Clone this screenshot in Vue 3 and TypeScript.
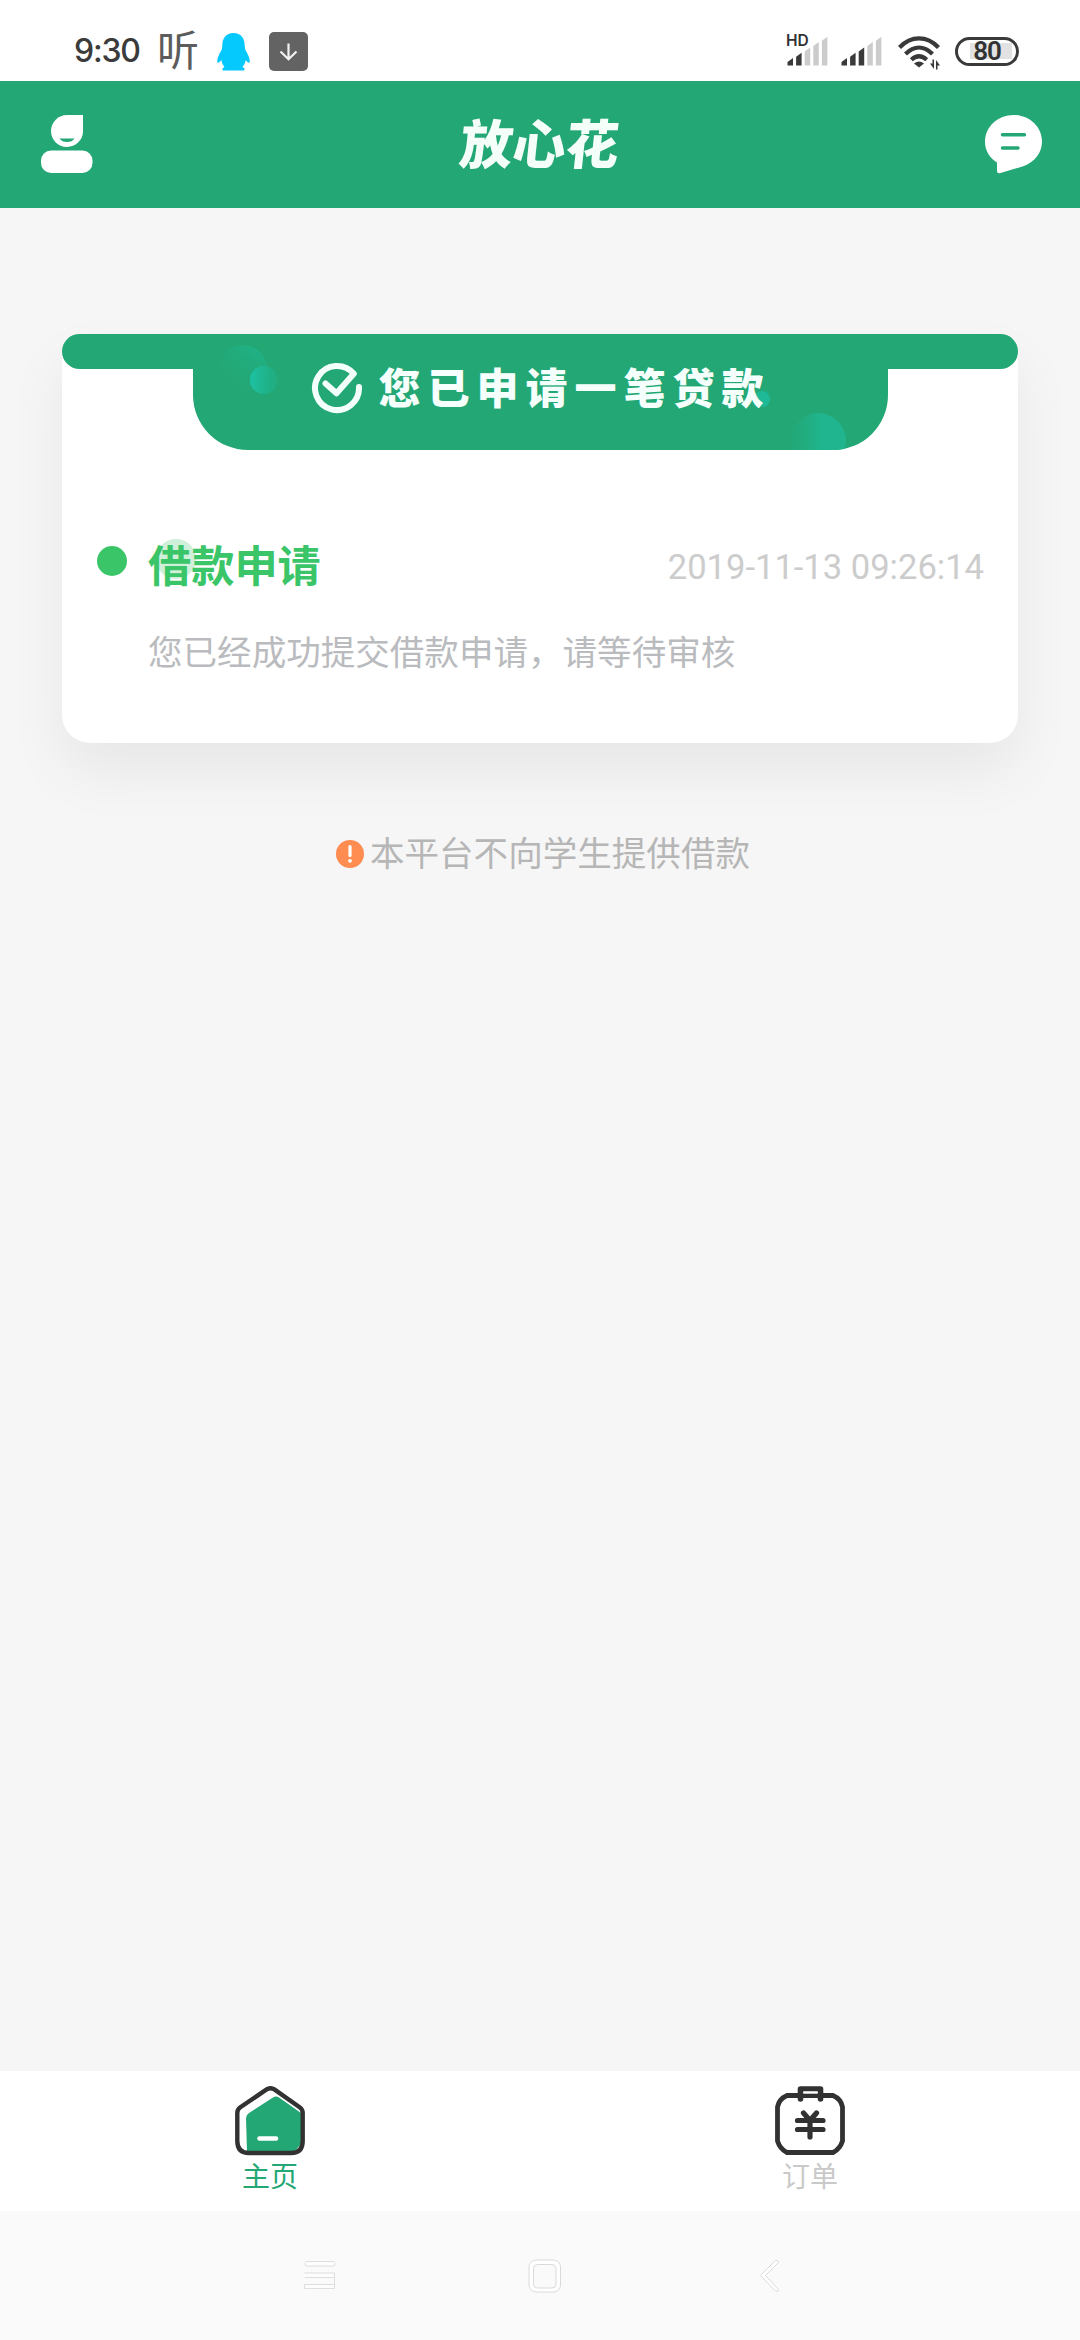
<script setup lang="ts">
interface SignalBar {
  x: number
  top: number
  on: boolean
}

const makeBars = (active: number): SignalBar[] =>
  [0, 1, 2, 3, 4].map((i) => ({ x: 0.5 + i * 8.6, top: 22 - i * 5.3, on: i < active }))

const signals = [
  { label: 'HD', bars: makeBars(2) },
  { label: '', bars: makeBars(3) },
]

const record = {
  title: '借款申请',
  time: '2019-11-13 09:26:14',
  detail: '您已经成功提交借款申请，请等待审核',
}
</script>

<template>
  <div class="screen">
    <div class="status">
      <span class="clock">9:30</span>
      <span class="listen">听</span>
      <svg class="penguin" width="33" height="38" viewBox="0 0 33 38">
        <path
          fill="#05c8fd"
          d="M16.500 0C9 0 5.500 5 5.300 12C5.200 15 5 16 4 18C1.500 22 0 26 .3 29C.7 31 3 29 4.300 27C4.900 30 6 32 7.500 34C5 35 4.500 37.500 7 37.500H26C28.500 37.500 28 35 25.500 34C27 32 28.200 30 28.800 27C30 29 32.300 31 32.700 29C33 26 31.500 22 29 18C28 16 27.800 15 27.700 12C27.500 5 24 0 16.500 0Z"
        />
      </svg>
      <svg class="download" width="39" height="39" viewBox="0 0 39 39">
        <rect width="39" height="39" rx="5" fill="#636363" />
        <path d="M19.500 11.500V27M11.500 19.500L19.500 27.300L27.500 19.500" fill="none" stroke="#f2f2f2" stroke-width="2.200" />
      </svg>
      <div class="status-right">
        <div v-for="(s, i) in signals" :key="i" class="signal" :class="{ second: i === 1 }">
          <svg width="42" height="30" viewBox="0 0 42 30">
            <path
              v-for="b in s.bars"
              :key="b.x"
              :d="`M${b.x} 29.500V${b.top + 4}L${b.x + 5.500} ${b.top}V29.500Z`"
              :fill="b.on ? '#3a3a3a' : '#cccccc'"
            />
          </svg>
          <span v-if="s.label" class="hd">{{ s.label }}</span>
        </div>
        <svg class="wifi" width="44" height="34" viewBox="0 0 44 34">
          <g fill="none" stroke="#393939" stroke-width="4.200">
            <path d="M1.500 11.500C13 -.7 29 -.7 40.500 11.500" />
            <path d="M7.500 18C16 9.500 26 9.500 34.500 18" />
            <path d="M13.300 23.800C18.500 19 23.500 19 28.700 23.800" />
          </g>
          <path d="M16 27.500Q21 23.500 26 27.500L21 31.500Z" fill="#393939" />
          <path d="M36 23.500V33L32 27.500H34.500V23.500ZM38 33.500V24L42 29.500H39.500V33.500Z" fill="#393939" />
        </svg>
        <div class="battery"><span class="charge">80</span></div>
      </div>
    </div>

    <header class="header">
      <svg width="52" height="59" viewBox="0 0 52 59">
        <path d="M26 0H42V16.500A16 16 0 1 1 26 0Z" fill="#fff" />
        <path d="M18.500 23.500H33.500Q31 27 26 27Q21 27 18.500 23.500Z" fill="#23a775" />
        <rect y="35.500" width="51.500" height="22.500" rx="10" fill="#fff" />
      </svg>
      <h1 class="brand">放心花</h1>
      <svg width="58" height="59" viewBox="0 0 58 59">
        <path
          d="M28.500 0C44 0 57 11.500 57 26.500C57 38 49.500 47 39 51L15.500 58Q12 59 12 56V47.500C5 43 0 36 0 27C0 11.500 13 0 28.500 0Z"
          fill="#fff"
        />
        <path d="M17.500 19.800H39.500M17.500 33H33" stroke="#23a775" stroke-width="3.400" stroke-linecap="round" />
      </svg>
    </header>

    <main class="content">
      <section class="card">
        <div class="strip"></div>
        <div class="banner">
          <svg class="bubbles" width="695" height="116" viewBox="0 0 695 116">
            <defs>
              <linearGradient id="fadeDown" x1="0.8" y1="0" x2="0.2" y2="0.9">
                <stop offset="0" stop-color="#20b387" />
                <stop offset="1" stop-color="#23a775" stop-opacity="0" />
              </linearGradient>
              <linearGradient id="fadeRight">
                <stop offset="0" stop-color="#1cc2a4" />
                <stop offset="1" stop-color="#20b086" stop-opacity="0.5" />
              </linearGradient>
              <linearGradient id="fadeLeft">
                <stop offset="0" stop-color="#22ab7c" stop-opacity="0.3" />
                <stop offset="0.55" stop-color="#20b58e" />
              </linearGradient>
            </defs>
            <circle cx="50" cy="35" r="24" fill="url(#fadeDown)" />
            <circle cx="71" cy="46" r="14" fill="url(#fadeRight)" />
            <circle cx="569" cy="65" r="8" fill="#1eba98" />
            <circle cx="625" cy="107" r="28" fill="url(#fadeLeft)" />
          </svg>
          <svg class="check" width="52" height="52" viewBox="0 0 52 52">
            <path
              d="M48 25A22 22 0 1 1 42.800 11.800L25.500 31.200L14.500 21.500"
              fill="none"
              stroke="#f3fffa"
              stroke-width="6"
              stroke-linecap="round"
              stroke-linejoin="round"
            />
          </svg>
          <span class="banner-text">您已申请一笔贷款</span>
        </div>
        <div class="record">
          <i class="dot"></i>
          <div class="record-body">
            <div class="record-head">
              <h2>{{ record.title }}</h2>
              <time>{{ record.time }}</time>
            </div>
            <p>{{ record.detail }}</p>
          </div>
        </div>
      </section>
      <div class="notice">
        <svg width="28" height="28" viewBox="0 0 28 28">
          <circle cx="14" cy="14" r="14" fill="#ff8c50" />
          <path d="M14 6.500V15.500" stroke="#fff" stroke-width="3.200" stroke-linecap="round" />
          <circle cx="14" cy="20.800" r="1.900" fill="#fff" />
        </svg>
        <span>本平台不向学生提供借款</span>
      </div>
    </main>

    <nav class="tabs">
      <a class="tab active">
        <svg width="70" height="70" viewBox="0 0 70 70">
          <path d="M11 32Q11 29 14 27L38 11.500Q41 9.500 44 11.500L66 27V58L59 66H12Z" fill="#23a775" />
          <path
            d="M32 3.200Q35.500 1.200 39 3.200L65 21.500Q67.700 23.500 67.700 27V55Q67.700 67 56 67H14Q2.300 67 2.300 55V27Q2.300 23.500 5 21.500Z"
            fill="none"
            stroke="#323232"
            stroke-width="4.400"
          />
          <path d="M24.500 52.500H41" stroke="#fff" stroke-width="4.600" stroke-linecap="round" />
        </svg>
        <span>主页</span>
      </a>
      <a class="tab">
        <svg width="70" height="70" viewBox="0 0 70 70">
          <g fill="none" stroke="#323232" stroke-width="4.800" stroke-linecap="round" stroke-linejoin="round">
            <path d="M12 9.500H58Q66 13 67.500 21V55Q65 63 58 66.500H12Q5 63 2.500 55V21Q4 13 12 9.500Z" />
            <path d="M25.500 13V3H45.500V13" stroke-width="5.600" />
            <path d="M28.500 27L35 34.500L41.500 27M35 34.500V51M22.500 34.500H48M22.500 43.500H48" stroke-width="5.200" />
          </g>
          <rect x="28.300" y="5.300" width="14.400" height="2.400" fill="#fff" />
        </svg>
        <span>订单</span>
      </a>
    </nav>

    <footer class="system">
      <svg width="32" height="34" viewBox="0 0 32 34">
        <path d="M2 2.500H30Q32 5 30 7H2Q0 5 2 2.500ZM.5 14H30.500V18.500H.5M30.500 14V29.500H.5V25.500H30.500" fill="#fdfdfd" stroke="#dedede" />
      </svg>
      <svg class="home" width="34" height="34" viewBox="0 0 34 34">
        <rect x="1" y="1" width="31.500" height="32" rx="7" fill="#fff" stroke="#dadada" />
        <rect x="5.500" y="5.500" width="22.500" height="23.500" rx="4" fill="#fafafa" stroke="#dadada" />
      </svg>
      <svg width="22" height="34" viewBox="0 0 22 34">
        <path d="M17 1L1.500 16.500L17 32.500L20 31L6.500 16.500L20 3Z" fill="#fff" stroke="#dadada" />
      </svg>
    </footer>
  </div>
</template>

<style>
body {
  margin: 0;
}
</style>

<style scoped>
.screen {
  display: flex;
  flex-direction: column;
  width: 1080px;
  height: 2340px;
  overflow: hidden;
  background: #f6f6f6;
  font-family: Roboto, 'Noto Sans CJK SC', sans-serif;
}
svg {
  display: block;
  flex: none;
}
.status {
  display: flex;
  align-items: center;
  box-sizing: border-box;
  height: 81px;
  padding: 21px 61px 0 74px;
  background: #fff;
}
.clock {
  width: 83px;
  font: 500 32px/40px Inter, sans-serif;
  letter-spacing: -1.2px;
  color: #3b3b3b;
}
.listen {
  width: 44px;
  margin-top: 1px;
  font-size: 42px;
  line-height: 42px;
  color: #5c5c5c;
}
.penguin {
  margin-left: 16px;
  margin-top: 1px;
}
.download {
  margin-left: 19px;
  margin-top: 1px;
}
.status-right {
  display: flex;
  align-items: center;
  margin-left: auto;
}
.signal {
  position: relative;
  width: 42px;
}
.signal.second {
  margin-left: 12px;
}
.hd {
  position: absolute;
  left: -1px;
  top: -3px;
  font: 600 15.500px/15px Inter, sans-serif;
  color: #333;
}
.wifi {
  margin-left: 15px;
  margin-top: 3px;
}
.battery {
  display: flex;
  align-items: center;
  justify-content: center;
  box-sizing: border-box;
  width: 64px;
  height: 29px;
  margin-left: 13px;
  border: 3px solid #3a3a3a;
  border-radius: 15px;
  background: linear-gradient(#e2e2e2, #e2e2e2) 12px center / 42px 16px no-repeat;
}
.charge {
  font: 600 26px/25px Roboto, sans-serif;
  letter-spacing: -1px;
  color: #333;
}
.header {
  display: flex;
  align-items: center;
  justify-content: space-between;
  box-sizing: border-box;
  height: 127px;
  padding: 0 37px 0 41px;
  background: #23a775;
}
.brand {
  margin: 3px 0 0;
  font-size: 53px;
  line-height: 60px;
  font-weight: 900;
  color: #f4fffa;
  transform: skewX(-6deg);
}
.content {
  flex: 1;
  padding: 126px 62px 0;
}
.card {
  box-sizing: border-box;
  height: 409px;
  border-radius: 18px 18px 28px 28px;
  background: #fff;
  box-shadow: 0 29px 58px rgba(0, 0, 0, 0.062);
}
.strip {
  height: 35px;
  border-radius: 18px;
  background: #23a775;
}
.banner {
  position: relative;
  display: flex;
  align-items: center;
  box-sizing: border-box;
  width: 695px;
  height: 116px;
  margin: -35px auto 0;
  padding-left: 118px;
  overflow: hidden;
  border-radius: 0 0 55px 55px;
  background: #23a775;
}
.bubbles {
  position: absolute;
  left: 0;
  top: 0;
}
.check {
  position: relative;
  margin-top: -9px;
}
.banner-text {
  position: relative;
  margin-top: -4px;
  margin-left: 16px;
  font-size: 42px;
  line-height: 50px;
  font-weight: 900;
  letter-spacing: 7px;
  white-space: nowrap;
  color: #f5fffb;
}
.record {
  display: flex;
  padding: 86px 34px 0 35px;
}
.dot {
  flex: none;
  width: 30px;
  height: 30px;
  margin-top: 10px;
  border-radius: 50%;
  background: #3ac569;
}
.record-body {
  flex: 1;
  margin-left: 21px;
}
.record-head {
  display: flex;
  align-items: flex-start;
  justify-content: space-between;
  height: 60px;
  background: radial-gradient(circle at 28px 23px, #d0f0da 19.500px, transparent 20.500px);
}
h2 {
  margin: 3px 0 0;
  font-size: 43.200px;
  line-height: 58px;
  font-weight: 700;
  color: #3ac569;
}
time {
  margin-top: 2px;
  font-size: 34.560px;
  line-height: 58px;
  color: #ccc;
}
p {
  margin: 32px 0 0;
  font-size: 34.560px;
  line-height: 50px;
  font-weight: 400;
  color: #b9bbbe;
}
.notice {
  display: flex;
  align-items: center;
  justify-content: center;
  gap: 6px;
  margin-top: 86px;
  padding-left: 6px;
  font-size: 34.560px;
  line-height: 50px;
  font-weight: 400;
  color: #b6b6b6;
}
.tabs {
  display: flex;
  height: 140px;
  background: #fff;
}
.tab {
  flex: 1;
  display: flex;
  flex-direction: column;
  align-items: center;
  gap: 2px;
  padding-top: 15px;
  font-size: 28px;
  line-height: 40px;
  font-weight: 400;
  color: #c9c9c9;
}
.tab.active {
  color: #23a775;
}
.system {
  display: flex;
  align-items: center;
  justify-content: space-between;
  box-sizing: border-box;
  height: 129px;
  padding: 0 299px 0 304px;
  background: #fafafa;
}
.home {
  margin-right: 6px;
}
</style>
